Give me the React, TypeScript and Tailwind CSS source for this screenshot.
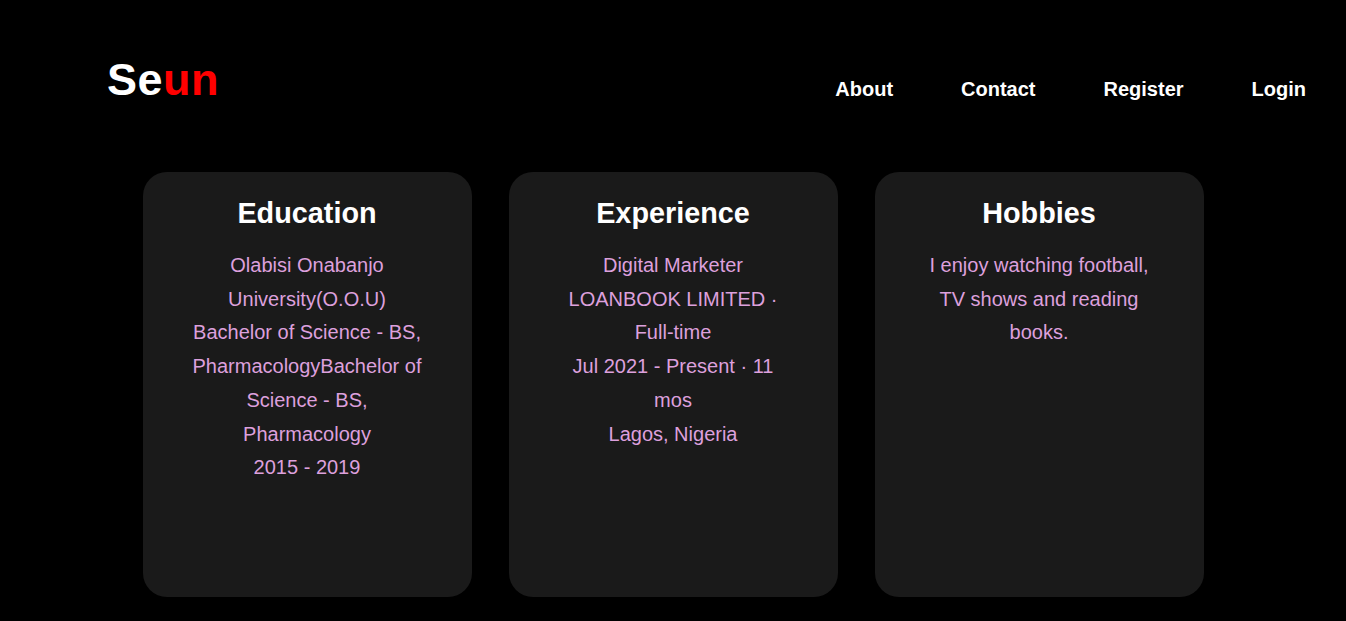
import React from "react";

const font = { fontFamily: '"Liberation Sans", Arial, sans-serif' };

function Card({ title, children }: { title: string; children: React.ReactNode }) {
  return (
    <div className="w-[329px] h-[425px] rounded-[24px] bg-[#1a1a1a] px-[46px] pt-[25px] text-center">
      <h2 className="text-[28.8px] font-bold text-white leading-[33px]">{title}</h2>
      <p className="mt-[19px] text-[20px] leading-[33.7px] text-[#dda0dd]">{children}</p>
    </div>
  );
}

export default function App() {
  return (
    <div className="min-h-screen bg-black" style={font}>
      <header className="flex items-start justify-between pl-[107px] pr-[40px] pt-[54px]">
        <div className="text-[45px] font-bold leading-[52px] text-white tracking-[0.5px]">
          Se<span className="text-[#ff0000]">un</span>
        </div>
        <nav className="mt-[24px] flex items-center gap-[68px] text-[20px] font-bold text-white leading-[23px]">
          <a>About</a>
          <a>Contact</a>
          <a>Register</a>
          <a>Login</a>
        </nav>
      </header>
      <main className="mt-[66px] flex justify-center gap-[37px]">
        <Card title="Education">
          Olabisi Onabanjo University(O.O.U)
          <br />
          Bachelor of Science - BS, PharmacologyBachelor of Science - BS, Pharmacology
          <br />
          2015 - 2019
        </Card>
        <Card title="Experience">
          Digital Marketer
          <br />
          LOANBOOK LIMITED · Full-time
          <br />
          Jul 2021 - Present · 11 mos
          <br />
          Lagos, Nigeria
        </Card>
        <Card title="Hobbies">I enjoy watching football, TV shows and reading books.</Card>
      </main>
    </div>
  );
}
